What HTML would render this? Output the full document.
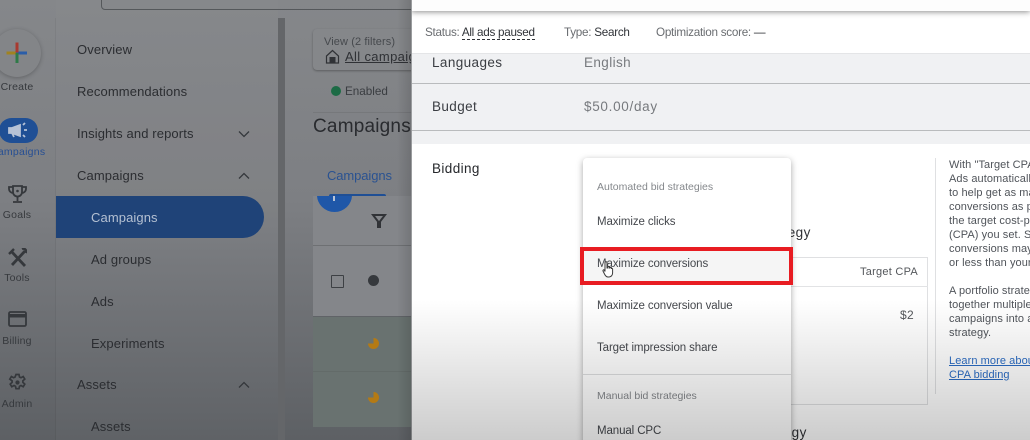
<!DOCTYPE html>
<html><head><meta charset="utf-8">
<style>
html,body{margin:0;padding:0}
body{width:1030px;height:440px;overflow:hidden;position:relative;background:#fff;font-family:"Liberation Sans",sans-serif}
#all{position:absolute;left:0;top:0;width:1030px;height:440px;overflow:hidden;filter:blur(.35px)}
.a{position:absolute;white-space:nowrap}
.t{position:absolute;white-space:nowrap;font-size:13px;line-height:16px;letter-spacing:.3px;margin-top:1px}
#left{position:absolute;left:0;top:0;width:411px;height:440px;overflow:hidden;background:linear-gradient(#85878a,#7d7f83 200px,#5d6064 440px)}
.n{color:#2b2d31;font-size:13px;letter-spacing:.12px}
.r{color:#36393d;font-size:10.5px;letter-spacing:.2px;width:34px;text-align:center;left:0}
.m{font-size:11.5px;letter-spacing:-.1px;color:#45484d}
.h{font-size:10.5px;letter-spacing:0;color:#85888c}
.s{font-size:11.7px;letter-spacing:-.27px;color:#6a6d71}
.l{font-size:13.5px;letter-spacing:.4px}
</style></head><body><div id="all">
<div id="left">
 <div class="a" style="left:56px;top:0;width:222px;height:440px;background:rgba(255,255,255,.015)"></div>
 <div class="a" style="left:55px;top:18px;width:1px;height:422px;background:rgba(0,0,0,.05)"></div>
 <div class="a" style="left:101px;top:-10px;width:330px;height:18px;border:1px solid #55585b;border-radius:4px"></div>
 <div class="a" style="left:278px;top:18px;width:7px;height:422px;background:#646669"></div>
 <!-- rail -->
 <div class="a" style="left:-7px;top:29px;width:48px;height:48px;border-radius:50%;background:#838588;box-shadow:0 1px 4px rgba(0,0,0,.25)"></div>
 <svg class="a" style="left:6px;top:41px" width="22" height="24"><rect x="0.5" y="10.5" width="10" height="3" fill="#a08320"/><rect x="10" y="10.5" width="11" height="3" fill="#2a5da8"/><rect x="9.500" y="1.500" width="3" height="10" fill="#a83a30"/><rect x="9.500" y="12" width="3" height="10" fill="#2f7a48"/></svg>
 <div class="t r" style="top:78px">Create</div>
 <div class="a" style="left:-1px;top:118px;width:39px;height:25px;border-radius:13px;background:#1f4f95"></div>
 <svg class="a" style="left:8px;top:122px" width="20" height="17" fill="none" stroke="#b6c2d6" stroke-width="1.800"><path d="M1 6v5h3l8 3V3L4 6zM4 11l2 4" fill="#b6c2d6"/><path d="M15 3l2-2M16 8h3M15 13l2 2"/></svg>
 <div class="t r" style="top:143px;color:#274f93;left:-10px;width:54px;letter-spacing:.25px">Campaigns</div>
 <svg class="a" style="left:8px;top:184px" width="19" height="20" fill="none" stroke="#35383c" stroke-width="1.800"><path d="M5 2h9v6a4.500 4.500 0 0 1-9 0zM5 3H1v2c0 2 2 4 4 4M14 3h4v2c0 2-2 4-4 4M9.500 13v4M5 18h9"/><circle cx="9.500" cy="7" r="1.300" fill="#35383c" stroke="none"/></svg>
 <div class="t r" style="top:206px">Goals</div>
 <svg class="a" style="left:8px;top:248px" width="19" height="19" fill="none" stroke="#35383c" stroke-width="2.800"><path d="M3 3l14 15M17 3L4 17"/><path d="M1 6l5-5M14 1a3 3 0 0 1 4 4" stroke-width="2.400"/></svg>
 <div class="t r" style="top:269px">Tools</div>
 <svg class="a" style="left:8px;top:311px" width="19" height="16" fill="none" stroke="#35383c" stroke-width="1.800"><rect x="1" y="1" width="17" height="14" rx="1.500"/><rect x="1" y="3" width="17" height="3.500" fill="#35383c" stroke="none"/></svg>
 <div class="t r" style="top:332px">Billing</div>
 <svg class="a" style="left:8px;top:373px" width="19" height="19" viewBox="0 0 19 19" fill="none" stroke="#35383c" stroke-width="1.700"><path d="M8 1.500h3l.5 2.500 1.500.7 2.200-1.200 1.600 2.600-1.900 1.700v1.600l1.900 1.700-1.600 2.600-2.200-1.200-1.500.8-.5 2.400H8l-.5-2.400-1.500-.8-2.200 1.200-1.600-2.600 1.900-1.700V7.800L1.800 6.100l1.600-2.600L5.600 4.700 7.100 4z"/><circle cx="9.500" cy="9.500" r="2.100" fill="#35383c" stroke="none"/></svg>
 <div class="t r" style="top:395px">Admin</div>
 <!-- nav -->
 <div class="t n" style="left:77px;top:41px">Overview</div>
 <div class="t n" style="left:77px;top:83px">Recommendations</div>
 <div class="t n" style="left:77px;top:125px">Insights and reports</div>
 <div class="t n" style="left:77px;top:167px">Campaigns</div>
 <svg class="a" style="left:238px;top:130px" width="12" height="8" fill="none" stroke="#35383c" stroke-width="1.300"><path d="M1 1.500l5 5 5-5"/></svg>
 <svg class="a" style="left:238px;top:172px" width="12" height="8" fill="none" stroke="#35383c" stroke-width="1.300"><path d="M1 6.500l5-5 5 5"/></svg>
 <div class="a" style="left:56px;top:196px;width:208px;height:42px;background:#1f4378;border-radius:0 21px 21px 0"></div>
 <div class="t" style="left:91px;top:209px;color:#b4c0d2;letter-spacing:.1px">Campaigns</div>
 <div class="t n" style="left:91px;top:251px">Ad groups</div>
 <div class="t n" style="left:91px;top:293px">Ads</div>
 <div class="t n" style="left:91px;top:335px">Experiments</div>
 <div class="t n" style="left:77px;top:376px">Assets</div>
 <svg class="a" style="left:238px;top:381px" width="12" height="8" fill="none" stroke="#35383c" stroke-width="1.300"><path d="M1 6.500l5-5 5 5"/></svg>
 <div class="t n" style="left:91px;top:418px">Assets</div>
 <!-- content -->
 <div class="a" style="left:313px;top:29px;width:110px;height:41px;background:#85878a;border-radius:4px;box-shadow:0 1px 2px rgba(0,0,0,.3)"></div>
 <div class="t" style="left:324px;top:33px;font-size:11px;letter-spacing:.1px;color:#46494d">View (2 filters)</div>
 <svg class="a" style="left:325px;top:49px" width="15" height="15" fill="none" stroke="#303236" stroke-width="1.200"><path d="M1.500 7L7.500 1.500 13.500 7V14h-12z"/><rect x="4.500" y="8" width="6" height="6" fill="#303236" stroke="none"/></svg>
 <div class="t" style="left:345px;top:48px;color:#2f3135;text-decoration:underline;letter-spacing:.35px">All campaigns</div>
 <div class="a" style="left:331px;top:86px;width:10px;height:10px;border-radius:50%;background:#1c6b45"></div>
 <div class="t" style="left:345px;top:83px;font-size:11.700px;letter-spacing:0;color:#3a3d41">Enabled</div>
 <div class="a" style="left:313px;top:112px;width:98px;height:1px;background:rgba(0,0,0,.08)"></div>
 <div class="t" style="left:313px;top:115px;font-size:19px;line-height:22px;letter-spacing:.2px;color:#292b2f">Campaigns</div>
 <div class="t" style="left:327px;top:167px;color:#2a5291;letter-spacing:-.1px">Campaigns</div>
 <div class="a" style="left:313px;top:196px;width:98px;height:120px;background:#84868a"></div>
 <div class="a" style="left:329px;top:194px;width:57px;height:2px;background:#1f4f95;border-radius:2px 2px 0 0"></div>
 <div class="a" style="left:317px;top:178px;width:35px;height:34px;border-radius:50%;clip-path:inset(18px 0 0 0);background:#1f57a8"></div>
 <div class="a" style="left:333px;top:196px;width:2px;height:5px;background:#b9c4d6"></div>
 <svg class="a" style="left:371px;top:213px" width="16" height="16" fill="none" stroke="#313337" stroke-width="2"><path d="M2 2h12L9 8.500V14H7V8.500z"/></svg>
 <div class="a" style="left:313px;top:245px;width:98px;height:1px;background:#6e7073"></div>
 <div class="a" style="left:313px;top:316px;width:98px;height:1px;background:#606367"></div>
 <div class="a" style="left:331px;top:275px;width:11px;height:11px;border:1.500px solid #3d4044;border-radius:1px"></div>
 <div class="a" style="left:368px;top:275px;width:11px;height:11px;border-radius:50%;background:#36393d"></div>
 <div class="a" style="left:313px;top:317px;width:98px;height:110px;background:#697270"></div>
 <div class="a" style="left:313px;top:371px;width:98px;height:1px;background:#636b69"></div>
 <div class="a" style="left:368px;top:338px;width:11px;height:11px;border-radius:50%;background:conic-gradient(#b47a14 0 75%,transparent 75%)"></div>
 <div class="a" style="left:368px;top:392px;width:11px;height:11px;border-radius:50%;background:conic-gradient(#b47a14 0 75%,transparent 75%)"></div>
 <div class="a" style="left:397px;top:0;width:14px;height:440px;background:linear-gradient(90deg,transparent,rgba(0,0,0,.12))"></div>
</div>
<!-- right -->
<div class="a" style="left:411px;top:0;width:619px;height:440px;background:#fff;overflow:hidden">
 <div class="a" style="left:0;top:0;width:619px;height:11px;background:#fdfdfd;box-shadow:0 1px 6px rgba(0,0,0,.45)"></div>
 <div class="a" style="left:0;top:53px;width:619px;height:91px;background:#f0f1f3;border-top:1px solid #e4e5e7;box-sizing:border-box"></div>
 <div class="a" style="left:0;top:83px;width:619px;height:1px;background:#b9bbbd"></div>
 <div class="a" style="left:0;top:130px;width:619px;height:1px;background:#b9bbbd"></div>
 <div class="t s" style="left:14px;top:24px">Status: <span style="color:#303338;border-bottom:1px dashed #303338">All ads paused</span></div>
 <div class="t s" style="left:153px;top:24px">Type: <span style="color:#303338">Search</span></div>
 <div class="t s" style="left:245px;top:24px">Optimization score: <span style="color:#303338">—</span></div>
 <div class="t l" style="left:21px;top:54px;color:#3a3d42">Languages</div>
 <div class="t l" style="left:173px;top:54px;color:#777a7e">English</div>
 <div class="t l" style="left:21px;top:98px;color:#3a3d42">Budget</div>
 <div class="t l" style="left:173px;top:98px;color:#777a7e;letter-spacing:.7px">$50.00/day</div>
 <div class="t l" style="left:21px;top:160px;color:#26282c">Bidding</div>
 <div class="t l" style="left:269px;top:224px;color:#2f3135">Select a bid strategy</div>
 <div class="t l" style="left:265px;top:424px;color:#2f3135">Select a bid strategy</div>
 <div class="a" style="left:300px;top:257px;width:217px;height:148px;border:1px solid #dfe0e2;box-sizing:border-box"></div>
 <div class="a" style="left:300px;top:286px;width:217px;height:1px;background:#e2e3e5"></div>
 <div class="t" style="left:449px;top:263px;font-size:11px;letter-spacing:.25px;color:#54575b">Target CPA</div>
 <div class="t" style="left:489px;top:306px;font-size:12px;color:#54575b">$2</div>
 <div class="a" style="left:524px;top:158px;width:1px;height:236px;background:#dfe0e2"></div>
 <div class="a" style="left:538px;top:158px;font-size:11px;line-height:14px;letter-spacing:.08px;color:#50545a;white-space:pre">With "Target CPA" bidding, Google
Ads automatically sets bids
to help get as many
conversions as possible at
the target cost-per-action
(CPA) you set. Some
conversions may cost more
or less than your target.

A portfolio strategy groups
together multiple
campaigns into a single
strategy.

<span style="color:#2b6cc4;text-decoration:underline">Learn more about Target</span>
<span style="color:#2b6cc4;text-decoration:underline">CPA bidding</span></div>
 <!-- menu -->
 <div class="a" style="left:172px;top:158px;width:208px;height:300px;background:#fff;border-radius:4px;box-shadow:0 2px 7px rgba(0,0,0,.35)"></div>
 <div class="t h" style="left:186px;top:178px">Automated bid strategies</div>
 <div class="t m" style="left:186px;top:213px">Maximize clicks</div>
 <div class="a" style="left:172px;top:250px;width:208px;height:33px;background:#f5f5f5"></div>
 <div class="t m" style="left:186px;top:255px">Maximize conversions</div>
 <div class="t m" style="left:186px;top:297px">Maximize conversion value</div>
 <div class="t m" style="left:186px;top:339px">Target impression share</div>
 <div class="a" style="left:172px;top:374px;width:208px;height:1px;background:#dcdddf"></div>
 <div class="t h" style="left:186px;top:387px">Manual bid strategies</div>
 <div class="t m" style="left:186px;top:422px">Manual CPC</div>
 <!-- red box -->
 <div class="a" style="left:169px;top:247px;width:213px;height:38px;border:4px solid #e81c22;box-sizing:border-box"></div>
 <!-- cursor -->
 <svg class="a" style="left:191px;top:261px" width="12" height="17" viewBox="0 0 12 17" fill="#fff" stroke="#3a3a3a" stroke-width="1"><path d="M3 1.500c0-1 2-1 2 0V7h1V6c0-.8 1.500-.8 1.500 0v1h.6c0-.8 1.400-.8 1.400 0V8c0-.6 1.100-.6 1.100 0v4c0 2-1.500 4-3.500 4H6c-2 0-2.800-1.500-3.500-3L1 10c-.4-1 .8-1.600 1.300-.8L3 10.500z"/></svg>
 <div class="a" style="left:0;top:0;width:1px;height:440px;background:#9a9c9e"></div>
</div>
<!-- bottom fade on right panel -->
<div class="a" style="left:411px;top:300px;width:619px;height:140px;background:linear-gradient(transparent,rgba(0,0,0,.2));pointer-events:none"></div>
</div></body></html>
